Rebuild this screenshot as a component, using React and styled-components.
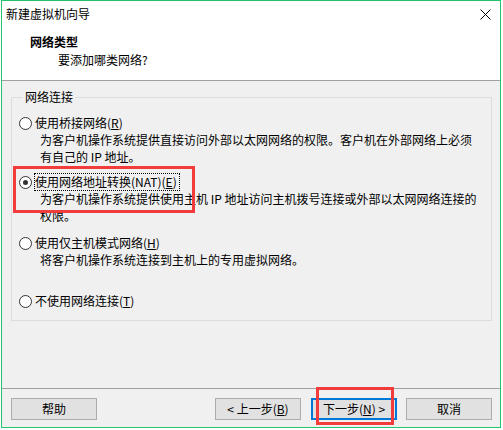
import styled, { createGlobalStyle } from "styled-components";

const Global = createGlobalStyle`
    body {
        margin: 0;
        background: #ffffff;
        font-family: "Noto Sans CJK SC", "Noto Sans", sans-serif;
        font-size: 12px;
        color: #000;
    }
`;

const Window = styled.div`
    position: relative;
    box-sizing: border-box;
    width: 500px;
    height: 428px;
    margin-left: 1px;
    border: 1px solid #22c46e;
    display: flex;
    flex-direction: column;
    background: #f0f0f0;
`;

const Top = styled.div`
    background: #fff;
    height: 80px;
    border-bottom: 1px solid #a0a0a0;
    box-sizing: border-box;
    display: flex;
    flex-direction: column;
`;

const TitleBar = styled.div`
    height: 26px;
    display: flex;
    align-items: center;
    justify-content: space-between;
    padding: 0 9px 0 4px;
    line-height: 16px;
`;

const Heading = styled.div`
    margin: 7px 0 0 28px;
    font-weight: bold;
    line-height: 16px;
`;

const SubHeading = styled.div`
    margin: 2px 0 0 56px;
    line-height: 16px;
`;

const Body = styled.div`
    flex: 1;
    padding: 8px 8px 0 9px;
`;

const Group = styled.fieldset`
    margin: 0;
    padding: 10px 0 11px 7px;
    border: 1px solid #dcdcdc;
    display: grid;
    grid-template-rows: 59px 61px 58px auto;
`;

const Legend = styled.legend`
    margin-left: 4px;
    padding: 0 2px;
    line-height: 16px;
`;

const Option = styled.div`
    display: flex;
    flex-direction: column;
`;

const OptionRow = styled.div`
    display: flex;
    align-items: center;
    height: 16px;
`;

const Radio = styled.span`
    box-sizing: border-box;
    width: 13px;
    height: 13px;
    border-radius: 50%;
    border: 1px solid #333;
    background: #fff;
    margin-right: 3px;
    display: flex;
    align-items: center;
    justify-content: center;
    flex-shrink: 0;

    &::after {
        content: "";
        width: 5px;
        height: 5px;
        border-radius: 50%;
        background: #333;
        display: ${p => (p.$checked ? "block" : "none")};
    }
`;

const Label = styled.span`
    line-height: 16px;
    outline: ${p => (p.$focused ? "1px dotted #000" : "none")};
    outline-offset: 0;
    padding-right: ${p => (p.$focused ? "2px" : "0")};
`;

const Desc = styled.div`
    padding-left: 21px;
    line-height: 16px;
    margin-top: 1px;
`;

const Key = styled.span`
    text-decoration: underline;
`;

const Footer = styled.div`
    height: 39px;
    box-sizing: border-box;
    border-top: 1px solid #a0a0a0;
    display: flex;
    align-items: flex-start;
    padding: 9px 8px 0 9px;
`;

const Button = styled.div`
    box-sizing: border-box;
    width: 86px;
    height: 22px;
    border: ${p => (p.$default ? "2px solid #0078d7" : "1px solid #adadad")};
    background: #e1e1e1;
    display: flex;
    align-items: center;
    justify-content: center;
    margin-left: ${p => p.$gap || 0}px;
    line-height: 16px;
`;

const Spacer = styled.div`
    flex: 1;
`;

const Mark = styled.div`
    position: absolute;
    box-sizing: border-box;
    border: 3px solid #f23b3b;
    pointer-events: none;
`;

const CloseIcon = () => (
    <svg width="11" height="11" viewBox="0 0 11 11">
        <path d="M0.5 0.5 L10.5 10.5 M10.5 0.5 L0.5 10.5" stroke="#000" strokeWidth="1" fill="none" />
    </svg>
);

const options = [
    {
        label: <>使用桥接网络(<Key>R</Key>)</>,
        desc: ["为客户机操作系统提供直接访问外部以太网网络的权限。客户机在外部网络上必须", "有自己的 IP 地址。"],
    },
    {
        label: <>使用网络地址转换(NAT)(<Key>E</Key>)</>,
        desc: ["为客户机操作系统提供使用主机 IP 地址访问主机拨号连接或外部以太网网络连接的", "权限。"],
        checked: true,
    },
    {
        label: <>使用仅主机模式网络(<Key>H</Key>)</>,
        desc: ["将客户机操作系统连接到主机上的专用虚拟网络。"],
    },
    {
        label: <>不使用网络连接(<Key>T</Key>)</>,
        desc: [],
    },
];

export default function App() {
    return <>
        <Global />
        <Window>
            <Top>
                <TitleBar>
                    <span>新建虚拟机向导</span>
                    <CloseIcon />
                </TitleBar>
                <Heading>网络类型</Heading>
                <SubHeading>要添加哪类网络?</SubHeading>
            </Top>
            <Body>
                <Group>
                    <Legend>网络连接</Legend>
                    {options.map((o, i) => (
                        <Option key={i}>
                            <OptionRow>
                                <Radio $checked={o.checked} />
                                <Label $focused={o.checked}>{o.label}</Label>
                            </OptionRow>
                            {o.desc.map((line, j) => <Desc key={j}>{line}</Desc>)}
                        </Option>
                    ))}
                </Group>
            </Body>
            <Footer>
                <Button>帮助</Button>
                <Spacer />
                <Button>&lt; 上一步(<Key>B</Key>)</Button>
                <Button $default $gap={10}>下一步(<Key>N</Key>) &gt;</Button>
                <Button $gap={9}>取消</Button>
            </Footer>
            <Mark style={{ left: 11, top: 165, width: 182, height: 47 }} />
            <Mark style={{ left: 314, top: 386, width: 78, height: 38 }} />
        </Window>
    </>;
}
